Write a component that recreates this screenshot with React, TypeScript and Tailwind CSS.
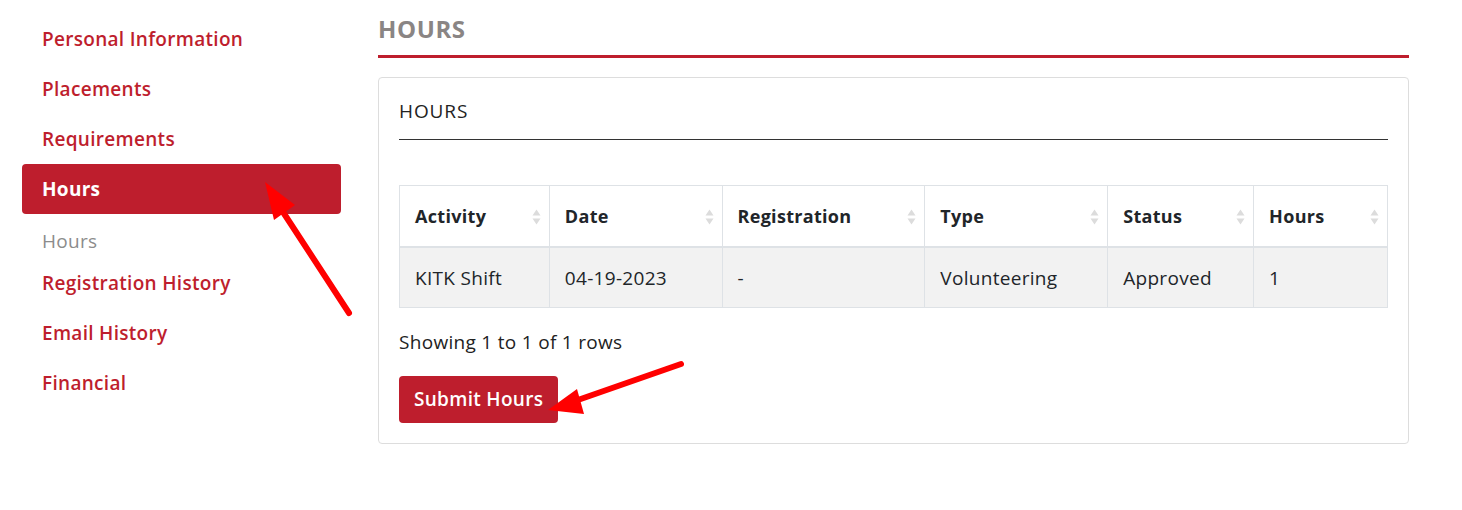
import React from "react";

function SortIcon() {
  return (
    <svg width="9" height="16" viewBox="0 0 9 16" className="shrink-0">
      <path d="M4.5 0.5 L8.5 6.5 L0.5 6.5 Z" fill="#dcdcdc" />
      <path d="M4.5 15.5 L8.5 9.5 L0.5 9.5 Z" fill="#dcdcdc" />
    </svg>
  );
}

const nav = [
  { label: "Personal Information" },
  { label: "Placements" },
  { label: "Requirements" },
  { label: "Hours", active: true },
];

const cols = [
  { label: "Activity", w: "w-[150px]" },
  { label: "Date", w: "w-[173px]" },
  { label: "Registration", w: "w-[203px]" },
  { label: "Type", w: "w-[183px]" },
  { label: "Status", w: "w-[146px]" },
  { label: "Hours", w: "w-[134px]" },
];
const row = ["KITK Shift", "04-19-2023", "-", "Volunteering", "Approved", "1"];

export default function App() {
  return (
    <div
      className="relative w-[1462px] h-[510px] bg-white flex tracking-[0.3px]"
      style={{ fontFamily: "'Open Sans', Lato, sans-serif" }}
    >
      <aside className="w-[378px] shrink-0 pt-[14px] pl-[22px] pr-[37px]">
        <ul className="flex flex-col">
          {nav.map((n) =>
            n.active ? (
              <li
                key={n.label}
                className="h-[50px] flex items-center px-5 rounded bg-[#be1e2d] text-white text-[19px] font-bold"
              >
                {n.label}
              </li>
            ) : (
              <li
                key={n.label}
                className="h-[50px] flex items-center px-5 text-[#be1e2d] text-[19px] font-semibold"
              >
                {n.label}
              </li>
            )
          )}
          <li className="h-[44px] flex items-center px-5 pt-[10px] text-[#8c8c8c] text-[19px] font-medium">
            Hours
          </li>
          {["Registration History", "Email History", "Financial"].map((l) => (
            <li
              key={l}
              className="h-[50px] flex items-center px-5 text-[#be1e2d] text-[19px] font-semibold"
            >
              {l}
            </li>
          ))}
        </ul>
      </aside>
      <main className="w-[1031px] shrink-0 pt-[12px]">
        <h1 className="text-[24px] font-bold text-[#8a8584] leading-[34px] pb-[9px] border-b-[3px] border-[#be1e2d] tracking-[0.6px]">
          HOURS
        </h1>
        <div className="mt-[19px] border border-[#dddddd] rounded px-[20px] pt-[19px] pb-[20px]">
          <div className="text-[19px] text-[#222] leading-[28px] pb-[14px] border-b border-[#333] tracking-[0.9px]">
            HOURS
          </div>
          <table className="mt-[45px] border-collapse border border-[#dee2e6] text-[19px] text-[#212529]">
            <thead>
              <tr className="h-[61px]">
                {cols.map((c) => (
                  <th
                    key={c.label}
                    className={`${c.w} border border-[#dee2e6] border-b-2 pl-[15px] pr-[8px] pt-[2px] font-bold text-left text-[18px]`}
                  >
                    <div className="flex items-center justify-between">
                      <span>{c.label}</span>
                      <SortIcon />
                    </div>
                  </th>
                ))}
              </tr>
            </thead>
            <tbody>
              <tr className="h-[61px] bg-[#f2f2f2]">
                {row.map((v, i) => (
                  <td key={i} className="border border-[#dee2e6] px-[15px] pt-[2px]">
                    {v}
                  </td>
                ))}
              </tr>
            </tbody>
          </table>
          <div className="mt-[20px] text-[19px] text-[#222] leading-[28px]">
            Showing 1 to 1 of 1 rows
          </div>
          <button className="mt-[20px] h-[47px] px-[15px] rounded bg-[#be1e2d] text-white text-[19px] font-semibold">
            Submit Hours
          </button>
        </div>
      </main>
      <svg className="absolute inset-0 pointer-events-none" width="1462" height="510">
        <line x1="349" y1="313" x2="283" y2="212" stroke="#ff0000" strokeWidth="6" strokeLinecap="round" />
        <polygon points="265,182 295,205 274,220" fill="#ff0000" />
        <line x1="681" y1="364" x2="575" y2="401" stroke="#ff0000" strokeWidth="6" strokeLinecap="round" />
        <polygon points="548,410 577,389 584,414" fill="#ff0000" />
      </svg>
    </div>
  );
}
